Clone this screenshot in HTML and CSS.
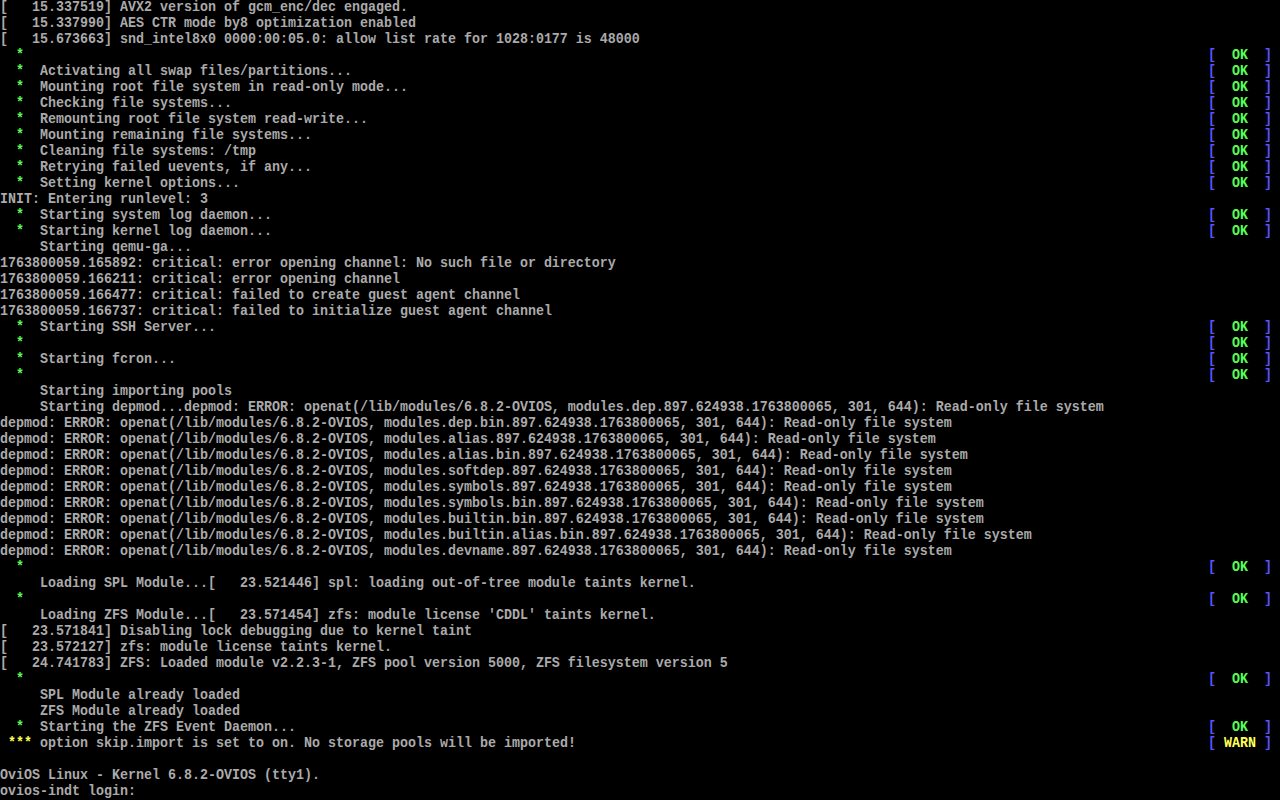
FILE: index.html
```html
<!DOCTYPE html>
<html>
<head>
<meta charset="utf-8">
<link rel="stylesheet" href="styles.css">
</head>
<body>
<div class="console">
<div class="row"><span class="t">[   15.337519] AVX2 version of gcm_enc/dec engaged.</span></div>
<div class="row"><span class="t">[   15.337990] AES CTR mode by8 optimization enabled</span></div>
<div class="row"><span class="t">[   15.673663] snd_intel8x0 0000:00:05.0: allow list rate for 1028:0177 is 48000</span></div>
<div class="row"><span class="t">  <span class="g">*</span></span><span class="st"><span class="b">[</span>  <span class="g">OK</span>  <span class="b">]</span></span></div>
<div class="row"><span class="t">  <span class="g">*</span>  Activating all swap files/partitions...</span><span class="st"><span class="b">[</span>  <span class="g">OK</span>  <span class="b">]</span></span></div>
<div class="row"><span class="t">  <span class="g">*</span>  Mounting root file system in read-only mode...</span><span class="st"><span class="b">[</span>  <span class="g">OK</span>  <span class="b">]</span></span></div>
<div class="row"><span class="t">  <span class="g">*</span>  Checking file systems...</span><span class="st"><span class="b">[</span>  <span class="g">OK</span>  <span class="b">]</span></span></div>
<div class="row"><span class="t">  <span class="g">*</span>  Remounting root file system read-write...</span><span class="st"><span class="b">[</span>  <span class="g">OK</span>  <span class="b">]</span></span></div>
<div class="row"><span class="t">  <span class="g">*</span>  Mounting remaining file systems...</span><span class="st"><span class="b">[</span>  <span class="g">OK</span>  <span class="b">]</span></span></div>
<div class="row"><span class="t">  <span class="g">*</span>  Cleaning file systems: /tmp</span><span class="st"><span class="b">[</span>  <span class="g">OK</span>  <span class="b">]</span></span></div>
<div class="row"><span class="t">  <span class="g">*</span>  Retrying failed uevents, if any...</span><span class="st"><span class="b">[</span>  <span class="g">OK</span>  <span class="b">]</span></span></div>
<div class="row"><span class="t">  <span class="g">*</span>  Setting kernel options...</span><span class="st"><span class="b">[</span>  <span class="g">OK</span>  <span class="b">]</span></span></div>
<div class="row"><span class="t">INIT: Entering runlevel: 3</span></div>
<div class="row"><span class="t">  <span class="g">*</span>  Starting system log daemon...</span><span class="st"><span class="b">[</span>  <span class="g">OK</span>  <span class="b">]</span></span></div>
<div class="row"><span class="t">  <span class="g">*</span>  Starting kernel log daemon...</span><span class="st"><span class="b">[</span>  <span class="g">OK</span>  <span class="b">]</span></span></div>
<div class="row"><span class="t">     Starting qemu-ga...</span></div>
<div class="row"><span class="t">1763800059.165892: critical: error opening channel: No such file or directory</span></div>
<div class="row"><span class="t">1763800059.166211: critical: error opening channel</span></div>
<div class="row"><span class="t">1763800059.166477: critical: failed to create guest agent channel</span></div>
<div class="row"><span class="t">1763800059.166737: critical: failed to initialize guest agent channel</span></div>
<div class="row"><span class="t">  <span class="g">*</span>  Starting SSH Server...</span><span class="st"><span class="b">[</span>  <span class="g">OK</span>  <span class="b">]</span></span></div>
<div class="row"><span class="t">  <span class="g">*</span></span><span class="st"><span class="b">[</span>  <span class="g">OK</span>  <span class="b">]</span></span></div>
<div class="row"><span class="t">  <span class="g">*</span>  Starting fcron...</span><span class="st"><span class="b">[</span>  <span class="g">OK</span>  <span class="b">]</span></span></div>
<div class="row"><span class="t">  <span class="g">*</span></span><span class="st"><span class="b">[</span>  <span class="g">OK</span>  <span class="b">]</span></span></div>
<div class="row"><span class="t">     Starting importing pools</span></div>
<div class="row"><span class="t">     Starting depmod...depmod: ERROR: openat(/lib/modules/6.8.2-OVIOS, modules.dep.897.624938.1763800065, 301, 644): Read-only file system</span></div>
<div class="row"><span class="t">depmod: ERROR: openat(/lib/modules/6.8.2-OVIOS, modules.dep.bin.897.624938.1763800065, 301, 644): Read-only file system</span></div>
<div class="row"><span class="t">depmod: ERROR: openat(/lib/modules/6.8.2-OVIOS, modules.alias.897.624938.1763800065, 301, 644): Read-only file system</span></div>
<div class="row"><span class="t">depmod: ERROR: openat(/lib/modules/6.8.2-OVIOS, modules.alias.bin.897.624938.1763800065, 301, 644): Read-only file system</span></div>
<div class="row"><span class="t">depmod: ERROR: openat(/lib/modules/6.8.2-OVIOS, modules.softdep.897.624938.1763800065, 301, 644): Read-only file system</span></div>
<div class="row"><span class="t">depmod: ERROR: openat(/lib/modules/6.8.2-OVIOS, modules.symbols.897.624938.1763800065, 301, 644): Read-only file system</span></div>
<div class="row"><span class="t">depmod: ERROR: openat(/lib/modules/6.8.2-OVIOS, modules.symbols.bin.897.624938.1763800065, 301, 644): Read-only file system</span></div>
<div class="row"><span class="t">depmod: ERROR: openat(/lib/modules/6.8.2-OVIOS, modules.builtin.bin.897.624938.1763800065, 301, 644): Read-only file system</span></div>
<div class="row"><span class="t">depmod: ERROR: openat(/lib/modules/6.8.2-OVIOS, modules.builtin.alias.bin.897.624938.1763800065, 301, 644): Read-only file system</span></div>
<div class="row"><span class="t">depmod: ERROR: openat(/lib/modules/6.8.2-OVIOS, modules.devname.897.624938.1763800065, 301, 644): Read-only file system</span></div>
<div class="row"><span class="t">  <span class="g">*</span></span><span class="st"><span class="b">[</span>  <span class="g">OK</span>  <span class="b">]</span></span></div>
<div class="row"><span class="t">     Loading SPL Module...[   23.521446] spl: loading out-of-tree module taints kernel.</span></div>
<div class="row"><span class="t">  <span class="g">*</span></span><span class="st"><span class="b">[</span>  <span class="g">OK</span>  <span class="b">]</span></span></div>
<div class="row"><span class="t">     Loading ZFS Module...[   23.571454] zfs: module license 'CDDL' taints kernel.</span></div>
<div class="row"><span class="t">[   23.571841] Disabling lock debugging due to kernel taint</span></div>
<div class="row"><span class="t">[   23.572127] zfs: module license taints kernel.</span></div>
<div class="row"><span class="t">[   24.741783] ZFS: Loaded module v2.2.3-1, ZFS pool version 5000, ZFS filesystem version 5</span></div>
<div class="row"><span class="t">  <span class="g">*</span></span><span class="st"><span class="b">[</span>  <span class="g">OK</span>  <span class="b">]</span></span></div>
<div class="row"><span class="t">     SPL Module already loaded</span></div>
<div class="row"><span class="t">     ZFS Module already loaded</span></div>
<div class="row"><span class="t">  <span class="g">*</span>  Starting the ZFS Event Daemon...</span><span class="st"><span class="b">[</span>  <span class="g">OK</span>  <span class="b">]</span></span></div>
<div class="row"><span class="t"> <span class="y">***</span> option skip.import is set to on. No storage pools will be imported!</span><span class="st"><span class="b">[</span> <span class="y">WARN</span> <span class="b">]</span></span></div>
<div class="row"><span class="t"> </span></div>
<div class="row"><span class="t">OviOS Linux - Kernel 6.8.2-OVIOS (tty1).</span></div>
<div class="row"><span class="t">ovios-indt login: </span></div>
</div>
</body>
</html>
```

FILE: styles.css
```css
html, body {
  margin: 0;
  padding: 0;
  background: #000000;
}
.console {
  width: 1280px;
  height: 800px;
  overflow: hidden;
  display: flex;
  flex-direction: column;
  font-family: "Liberation Mono", "DejaVu Sans Mono", monospace;
  font-size: 13.3333px;
  font-weight: bold;
  color: #aaaaaa;
}
.row {
  height: 16px;
  line-height: 16px;
  display: flex;
  justify-content: space-between;
  padding-right: 8px;
  white-space: pre;
  transform: scaleY(1.12);
}
.t { white-space: pre; }
.st { white-space: pre; }
.g { color: #55ff55; }
.b { color: #5555ff; }
.y { color: #ffff55; }
```
